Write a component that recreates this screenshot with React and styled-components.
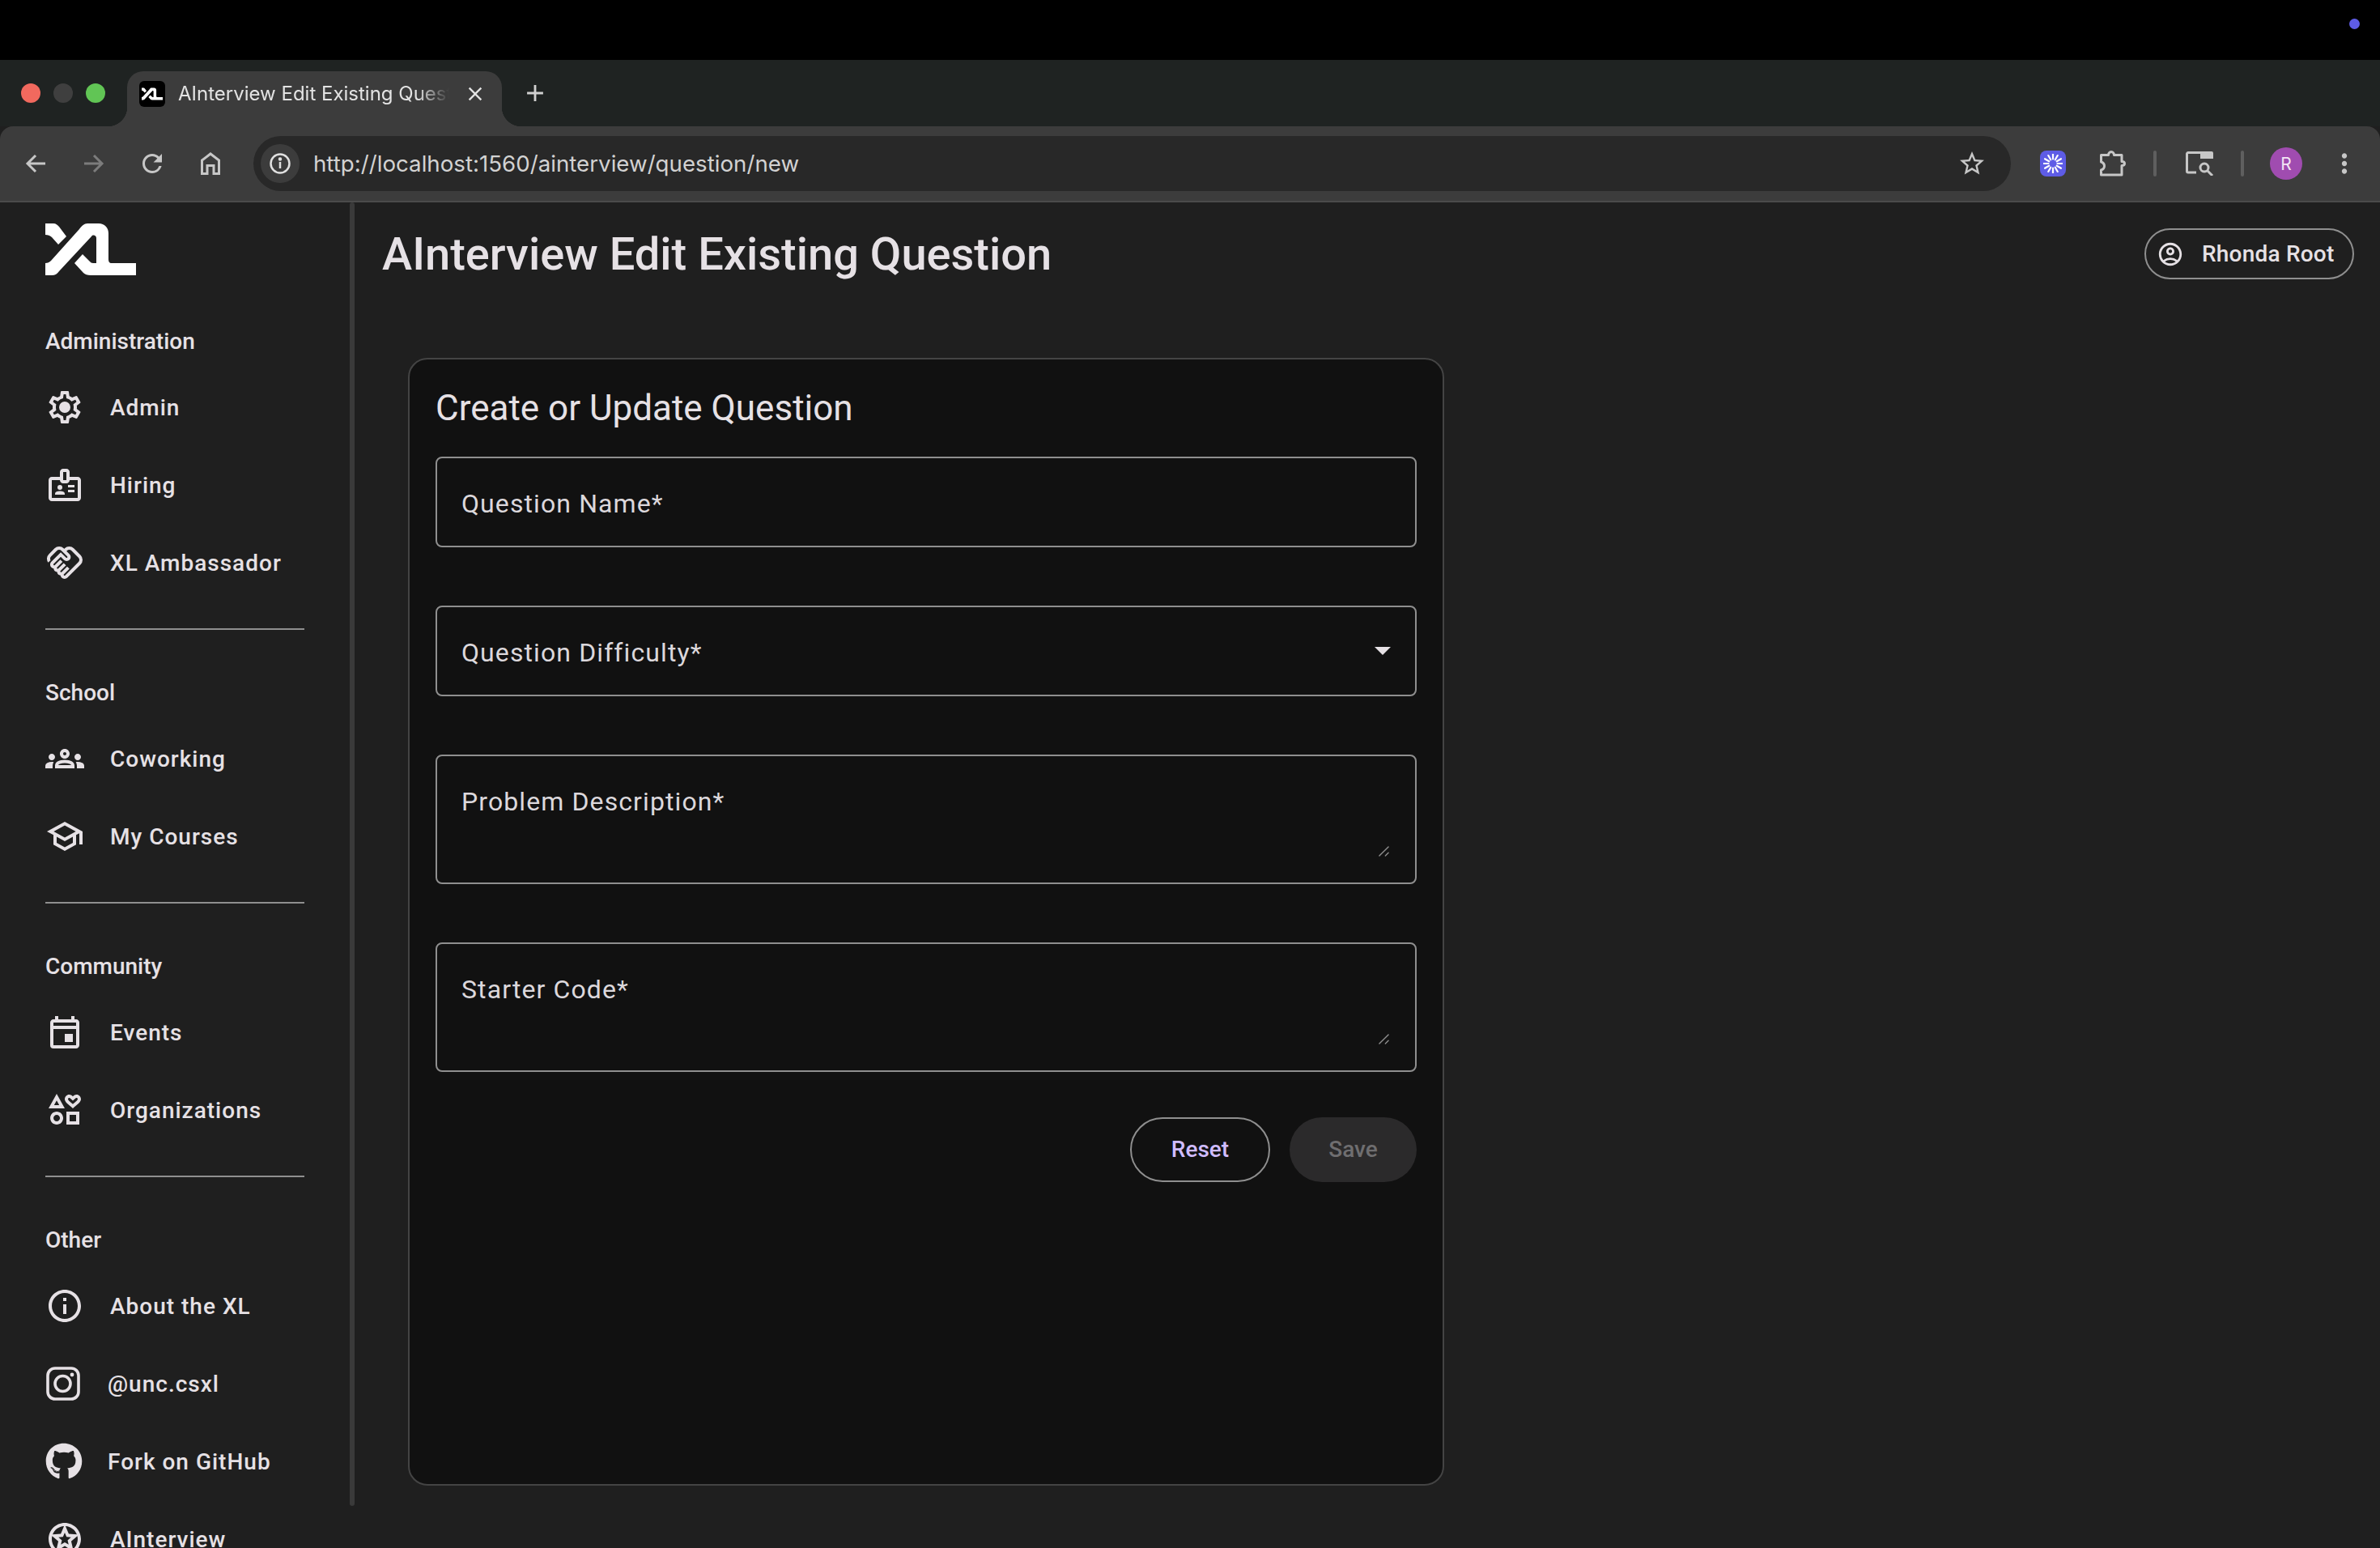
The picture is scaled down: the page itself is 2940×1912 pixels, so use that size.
import React from "react";
import styled, { createGlobalStyle } from "styled-components";
import {
  MdOutlineBadge, MdOutlineHandshake, MdOutlineGroups, MdOutlineSchool, MdOutlineEvent,
  MdOutlineInterests, MdInfoOutline, MdOutlineStars, MdOutlineAccountCircle, MdStarBorder,
  MdMoreVert, MdClose, MdAdd, MdRefresh,
} from "react-icons/md";
import { FaGithub } from "react-icons/fa";

const Global = createGlobalStyle`
  html, body { margin: 0; padding: 0; background: #1f1f1f; }
  body { width: 2940px; height: 1912px; overflow: hidden; font-family: Roboto, "Liberation Sans", sans-serif; }
  * { box-sizing: border-box; }
`;

const Screen = styled.div`
  width: 2940px; height: 1912px; display: flex; flex-direction: column; overflow: hidden;
  background: #1f1f1f; color: #e6e1e5;
`;
const MenuBar = styled.div`
  height: 74px; flex: none; background: #000; display: flex; align-items: center; justify-content: flex-end;
  padding: 0 25px 10px 0;
`;
const StatusDot = styled.span`
  width: 13px; height: 13px; border-radius: 50%; background: #5e5ce6; margin-top: -6px;
`;
const TabStrip = styled.div`
  height: 82px; flex: none; background: #1f2322; display: flex; align-items: flex-end; padding-left: 26px;
`;
const Lights = styled.div`
  display: flex; gap: 16px; align-self: flex-start; margin-top: 29px; width: 131px;
`;
const Light = styled.span`
  width: 24px; height: 24px; border-radius: 50%; background: ${p => p.$c};
`;
const Tab = styled.div`
  position: relative; width: 463px; height: 68px; background: #3c3c3c; border-radius: 20px 20px 0 0;
  display: flex; align-items: center; padding: 0 0 13px 15px;
  &::before, &::after {
    content: ""; position: absolute; bottom: 0; width: 24px; height: 24px;
  }
  &::before { left: -24px; background: radial-gradient(circle at 0 0, transparent 24px, #3c3c3c 24.5px); }
  &::after { right: -24px; background: radial-gradient(circle at 100% 0, transparent 24px, #3c3c3c 24.5px); }
`;
const Favicon = styled.span`
  width: 32px; height: 32px; flex: none; border-radius: 6px; background: #000; display: flex; align-items: center; justify-content: center;
`;
const TabTitle = styled.span`
  width: 335px; margin-left: 16px; font: 400 24px Inter, sans-serif; color: #e3e3e3; white-space: nowrap; overflow: hidden;
  -webkit-mask-image: linear-gradient(to right, #000 88%, transparent 100%);
  mask-image: linear-gradient(to right, #000 88%, transparent 100%);
`;
const TabClose = styled.span`
  margin-left: 18px; display: flex; color: #e3e3e3;
`;
const NewTab = styled.span`
  margin: 0 0 24px 24px; display: flex; color: #d0d0d0;
`;
const Toolbar = styled.div`
  height: 94px; flex: none; background: #3c3c3c; border-radius: 16px 16px 0 0; border-bottom: 2px solid #4b4b4b;
  display: flex; align-items: center; color: #c7c7c7;
`;
const NavSlot = styled.span`
  width: 72px; flex: none; display: flex; justify-content: center; color: ${p => p.$dim ? "#7c7c7c" : "#c7c7c7"};
  &:first-child { margin-left: 8px; }
`;
const Omnibox = styled.div`
  width: 2171px; height: 68px; margin-left: 17px; border-radius: 34px; background: #282828; display: flex; align-items: center;
  padding: 0 30px 0 9px;
`;
const InfoChip = styled.span`
  width: 48px; height: 48px; border-radius: 50%; background: #3c3c3c; flex: none; display: flex; align-items: center; justify-content: center;
`;
const Url = styled.span`
  margin-left: 17px; flex: 1; font: 400 27.7px Inter, sans-serif; color: #d2d2d2; white-space: nowrap;
`;
const ExtBadge = styled.span`
  width: 32px; height: 32px; margin-left: 36px; flex: none; border-radius: 8px; background: #5e5ce6; display: flex; align-items: center; justify-content: center;
`;
const ExtSlot = styled.span`
  display: flex; flex: none; margin-left: ${p => p.$ml}px;
`;
const ToolSep = styled.span`
  width: 4px; height: 32px; flex: none; border-radius: 2px; background: #5f5f5f; margin-left: ${p => p.$ml}px;
`;
const Avatar = styled.span`
  width: 40px; height: 40px; margin-left: 32px; flex: none; border-radius: 50%; background: #a04cb0; color: #f3e5f5;
  display: flex; align-items: center; justify-content: center; font: 400 21px Inter, sans-serif;
`;

const Body = styled.div`
  flex: 1; min-height: 0; display: flex;
`;
const Sidebar = styled.nav`
  width: 432px; flex: none; overflow: hidden; padding: 26px 0 0 56px; display: flex; flex-direction: column;
`;
const LogoSlot = styled.div`
  width: 112px; height: 64px; flex: none; margin-bottom: 61px; svg { display: block; }
`;
const SectionLabel = styled.div`
  height: 40px; flex: none; font: 500 28px/42px Roboto, sans-serif; color: #e6e1e5; margin-bottom: 14px;
`;
const NavItem = styled.div`
  height: 96px; flex: none; display: flex; align-items: center; gap: ${p => p.$gap ?? 32}px;
  font: 500 28px Roboto, sans-serif; letter-spacing: 1px; color: #e6e1e5; white-space: nowrap;
  svg { display: block; flex: none; }
`;
const Rule = styled.hr`
  width: 320px; height: 2px; flex: none; margin: 33px 0 57px; border: 0; background: #8f8f8f;
`;
const ScrollThumb = styled.div`
  width: 6px; height: 1610px; flex: none; border-radius: 3px; background: #3a3a3a;
`;
const Main = styled.main`
  flex: 1; min-width: 0; padding: 32px 32px 0 34px; display: flex; flex-direction: column;
`;
const Header = styled.header`
  display: flex; align-items: center; justify-content: space-between; height: 63px; flex: none; margin-bottom: 97px;
`;
const PageTitle = styled.h1`
  margin: 0; padding-top: 2px; font: 500 56px/65px Roboto, sans-serif; color: #e6e1e5;
`;
const UserPill = styled.div`
  width: 259px; height: 63px; border: 2px solid #8f8f8f; border-radius: 32px; display: flex; align-items: center; padding-left: 13px; gap: 22px;
  font: 500 28px Roboto, sans-serif; letter-spacing: 0.2px; color: #e6e1e5; white-space: nowrap;
`;
const Card = styled.section`
  width: 1280px; height: 1393px; margin-left: 32px; flex: none; background: #111; border: 2px solid #444; border-radius: 24px; padding: 32px;
  display: flex; flex-direction: column;
`;
const CardTitle = styled.h2`
  margin: 0 0 32px; font: 400 44px/56px Roboto, sans-serif; color: #e6e1e5;
`;
const Field = styled.div`
  position: relative; height: ${p => p.$h}px; flex: none; margin-bottom: ${p => p.$mb}px; border: 2px solid #8f8f8f; border-radius: 8px;
  padding: 36px 30px 0 30px; display: flex; justify-content: space-between; align-items: flex-start;
`;
const FieldLabel = styled.span`
  font: 400 32px/40px Roboto, sans-serif; letter-spacing: 1.1px; color: #dcd8dc;
`;
const Caret = styled.span`
  width: 0; height: 0; margin-top: 13px; border-left: 10px solid transparent; border-right: 10px solid transparent; border-top: 10px solid #e6e1e5;
`;
const Grip = styled.svg`
  position: absolute; right: 32px; bottom: 32px; width: 13px; height: 13px;
`;
const Actions = styled.div`
  display: flex; justify-content: flex-end; gap: 24px;
`;
const ResetButton = styled.button`
  width: 173px; height: 80px; border: 2px solid #8f8f8f; border-radius: 40px; background: transparent;
  color: #d0bcff; font: 500 28px Roboto, sans-serif; padding: 0 0 2px;
`;
const SaveButton = styled.button`
  width: 157px; height: 80px; border: 0; border-radius: 40px; background: #2b2a2b;
  color: #6f6e70; font: 500 28px Roboto, sans-serif; padding: 0 0 2px;
`;

const LogoMark = ({ w = 112, h = 64 }) => (
  <svg width={w} height={h} viewBox="0 0 112 64" fill="#fff">
    <path d="M0 0H10C13 0 15 2 17 4L26 16L16 26L8 17C6 15 3 14 0 14Z" />
    <path d="M0 64V49C3 49 5 48 7 46L42 7C45 3 48 0 52 0H66C73 0 78 5 78 12V44C78 47 79 49 82 49H112V64H56C52 64 49 63 47 61L36 49L46 38L55 47C56 48 57 49 59 49H63V18C63 15 59 13 57 16L17 59C15 62 12 64 8 64Z" />
  </svg>
);

const GEAR = "M19.43 12.98c.04-.32.07-.64.07-.98 0-.34-.03-.66-.07-.98l2.11-1.65c.19-.15.24-.42.12-.64l-2-3.46c-.09-.16-.26-.25-.44-.25-.06 0-.12.01-.17.03l-2.49 1c-.52-.4-1.08-.73-1.69-.98l-.38-2.65C14.46 2.18 14.25 2 14 2h-4c-.25 0-.46.18-.49.42l-.38 2.65c-.61.25-1.17.59-1.69.98l-2.49-1c-.06-.02-.12-.03-.18-.03-.17 0-.34.09-.43.25l-2 3.46c-.13.22-.07.49.12.64l2.11 1.65c-.04.32-.07.65-.07.98 0 .33.03.66.07.98l-2.11 1.65c-.19.15-.24.42-.12.64l2 3.46c.09.16.26.25.44.25.06 0 .12-.01.17-.03l2.49-1c.52.4 1.08.73 1.69.98l.38 2.65c.03.24.24.42.49.42h4c.25 0 .46-.18.49-.42l.38-2.65c.61-.25 1.17-.59 1.69-.98l2.49 1c.06.02.12.03.18.03.17 0 .34-.09.43-.25l2-3.46c.12-.22.07-.49-.12-.64l-2.11-1.65zm-1.98-1.71c.04.31.05.52.05.73 0 .21-.02.43-.05.73l-.14 1.13.89.7 1.08.84-.7 1.21-1.27-.51-1.04-.42-.9.68c-.43.32-.84.56-1.25.73l-1.06.43-.16 1.13-.2 1.35h-1.4l-.19-1.35-.16-1.13-1.06-.43c-.43-.18-.83-.41-1.23-.71l-.91-.7-1.06.43-1.27.51-.7-1.21 1.08-.84.89-.7-.14-1.13c-.03-.31-.05-.54-.05-.74s.02-.43.05-.73l.14-1.13-.89-.7-1.08-.84.7-1.21 1.27.51 1.04.42.9-.68c.43-.32.84-.56 1.25-.73l1.06-.43.16-1.13.2-1.35h1.39l.19 1.35.16 1.13 1.06.43c.43.18.83.41 1.23.71l.91.7 1.06-.43 1.27-.51.7 1.21-1.07.85-.89.7.14 1.13zM12 8.500a3.500 3.500 0 1 0 0 7 3.500 3.500 0 0 0 0-7z";
const GearIcon = () => (
  <svg width="48" height="48" viewBox="0 0 24 24" fill="currentColor"><path d={GEAR} /></svg>
);
const InstagramIcon = () => (
  <svg width="44" height="44" viewBox="0 0 44 44" fill="none" stroke="currentColor" strokeWidth="3.6">
    <rect x="3" y="3" width="38" height="38" rx="9" />
    <circle cx="21.500" cy="22" r="9.500" />
    <circle cx="33" cy="11" r="2.400" fill="currentColor" stroke="none" />
  </svg>
);

const BackIcon = ({ flip }) => (
  <svg width="26" height="24" viewBox="0 0 26 24" fill="none" stroke="currentColor" strokeWidth="3" style={flip ? { transform: "scaleX(-1)" } : undefined}>
    <path d="M25 12H3M13 2L3 12l10 10" />
  </svg>
);
const HomeIcon = () => (
  <svg width="24" height="28" viewBox="0 0 24 28" fill="none" stroke="currentColor" strokeWidth="3">
    <path d="M1.500 26.500V10L12 2l10.500 8v16.500h-6.500V16.500H8v10Z" />
  </svg>
);
const InfoIcon = () => (
  <svg width="26" height="26" viewBox="0 0 26 26" fill="none" stroke="#e0e0e0" strokeWidth="2.500">
    <circle cx="13" cy="13" r="11.500" /><path d="M13 11v8" /><circle cx="13" cy="7.500" r="1" fill="#e0e0e0" />
  </svg>
);
const Burst = () => (
  <svg width="24" height="24" viewBox="-12 -12 24 24" stroke="#fff" strokeWidth="2.200" strokeLinecap="round">
    {Array.from({ length: 12 }, (_, i) => {
      const a = (i * Math.PI) / 6;
      return <line key={i} x1={Math.cos(a) * 5.5} y1={Math.sin(a) * 5.5} x2={Math.cos(a) * 11.5} y2={Math.sin(a) * 11.5} />;
    })}
  </svg>
);
const PuzzleIcon = () => (
  <svg width="32" height="32" viewBox="0 0 32 32" fill="none" stroke="#c7c7c7" strokeWidth="3" strokeLinejoin="round">
    <path d="M1.500 5.500h9c0-2 1.500-4 3.500-4s3.500 2 3.500 4h9.500v8c2 0 3.500 1 3.500 2.500s-1.500 2.500-3.500 2.500v11.500H1.500v-6c3-1 4-3 4-5s-1-4-4-5z" />
  </svg>
);
const PanelSearchIcon = () => (
  <svg width="35" height="30" viewBox="0 0 35 30" fill="none" stroke="#c7c7c7" strokeWidth="3">
    <path d="M13 26H3a1.500 1.500 0 0 1-1.500-1.500V3A1.500 1.500 0 0 1 3 1.500h16" />
    <path d="M18 0h14a2 2 0 0 1 2 2v7H18z" fill="#c7c7c7" stroke="none" />
    <circle cx="23" cy="20" r="5" />
    <path d="M27 24l6 6" />
  </svg>
);
const GripMark = () => (
  <Grip viewBox="0 0 14 14" stroke="#8f8f8f" strokeWidth="1.500" strokeLinecap="round">
    <path d="M1 13L13 1M9 13l4-4" />
  </Grip>
);

const NAV = [
  { label: "Administration", items: [
    { icon: <GearIcon />, text: "Admin" },
    { icon: <MdOutlineBadge size={48} />, text: "Hiring" },
    { icon: <MdOutlineHandshake size={48} />, text: "XL Ambassador" },
  ] },
  { label: "School", items: [
    { icon: <MdOutlineGroups size={48} />, text: "Coworking" },
    { icon: <MdOutlineSchool size={48} />, text: "My Courses" },
  ] },
  { label: "Community", items: [
    { icon: <MdOutlineEvent size={48} />, text: "Events" },
    { icon: <MdOutlineInterests size={48} />, text: "Organizations" },
  ] },
  { label: "Other", items: [
    { icon: <MdInfoOutline size={48} />, text: "About the XL" },
    { icon: <InstagramIcon />, text: "@unc.csxl", gap: 33 },
    { icon: <FaGithub size={46} />, text: "Fork on GitHub", gap: 31 },
    { icon: <MdOutlineStars size={48} />, text: "AInterview" },
  ] },
];

export default function App() {
  return (
    <Screen>
      <Global />
      <MenuBar><StatusDot /></MenuBar>
      <TabStrip>
        <Lights>
          <Light $c="#f1695e" /><Light $c="#3f3f3f" /><Light $c="#61c555" />
        </Lights>
        <Tab>
          <Favicon><LogoMark w={26} h={16} /></Favicon>
          <TabTitle>AInterview Edit Existing Question</TabTitle>
          <TabClose><MdClose size={28} /></TabClose>
        </Tab>
        <NewTab><MdAdd size={34} /></NewTab>
      </TabStrip>
      <Toolbar>
        <NavSlot><BackIcon /></NavSlot>
        <NavSlot $dim><BackIcon flip /></NavSlot>
        <NavSlot><MdRefresh size={36} /></NavSlot>
        <NavSlot><HomeIcon /></NavSlot>
        <Omnibox>
          <InfoChip><InfoIcon /></InfoChip>
          <Url>http://localhost:1560/ainterview/question/new</Url>
          <MdStarBorder size={36} color="#c7c7c7" />
        </Omnibox>
        <ExtBadge><Burst /></ExtBadge>
        <ExtSlot $ml={42}><PuzzleIcon /></ExtSlot>
        <ToolSep $ml={34} />
        <ExtSlot $ml={36}><PanelSearchIcon /></ExtSlot>
        <ToolSep $ml={33} />
        <Avatar>R</Avatar>
        <ExtSlot $ml={33}><MdMoreVert size={38} /></ExtSlot>
      </Toolbar>
      <Body>
        <Sidebar>
          <LogoSlot><LogoMark /></LogoSlot>
          {NAV.map((section, i) => (
            <React.Fragment key={section.label}>
              <SectionLabel>{section.label}</SectionLabel>
              {section.items.map(item => (
                <NavItem key={item.text} $gap={item.gap}>{item.icon}<span>{item.text}</span></NavItem>
              ))}
              {i < NAV.length - 1 && <Rule />}
            </React.Fragment>
          ))}
        </Sidebar>
        <ScrollThumb />
        <Main>
          <Header>
            <PageTitle>AInterview Edit Existing Question</PageTitle>
            <UserPill><MdOutlineAccountCircle size={34} /><span>Rhonda Root</span></UserPill>
          </Header>
          <Card>
            <CardTitle>Create or Update Question</CardTitle>
            <Field $h={112} $mb={72}><FieldLabel>Question Name*</FieldLabel></Field>
            <Field $h={112} $mb={72}><FieldLabel>Question Difficulty*</FieldLabel><Caret /></Field>
            <Field $h={160} $mb={72}><FieldLabel>Problem Description*</FieldLabel><GripMark /></Field>
            <Field $h={160} $mb={56}><FieldLabel>Starter Code*</FieldLabel><GripMark /></Field>
            <Actions>
              <ResetButton>Reset</ResetButton>
              <SaveButton>Save</SaveButton>
            </Actions>
          </Card>
        </Main>
      </Body>
    </Screen>
  );
}
